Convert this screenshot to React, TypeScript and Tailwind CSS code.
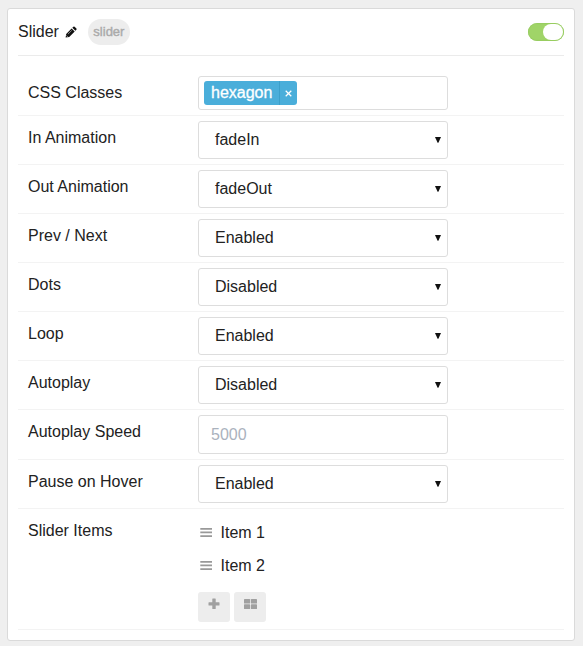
import type { ReactNode } from "react";

function Row({ label, children }: { label: string; children: ReactNode }) {
  return (
    <div className="flex border-b border-[#f3f3f3] py-[5px] pl-2.5">
      <div className="w-[170px] shrink-0 pt-[5px] leading-6">{label}</div>
      {children}
    </div>
  );
}

function Select({ value }: { value: string }) {
  return (
    <div className="flex h-[38px] w-[250px] items-center justify-between rounded-[3px] border border-[#dddddd] pr-[6px] pl-4">
      <span className="leading-6">{value}</span>
      <svg width="6" height="6" viewBox="0 0 6 6" fill="#111">
        <path d="M0 0H6L3.4 5.7H2.6Z" />
      </svg>
    </div>
  );
}

function Item({ name }: { name: string }) {
  return (
    <div className="flex h-[33px] items-center pl-[2px]">
      <svg width="12" height="9" viewBox="0 0 12 9" fill="#999" className="mr-[8.5px]">
        <path d="M0.3 0H12V1.7H0.3ZM0.3 3.6H12V5.3H0.3ZM0.3 7.2H12V8.9H0.3Z" />
      </svg>
      <span className="leading-6">{name}</span>
    </div>
  );
}

export default function App() {
  return (
    <div className="h-[646px] w-[583px] bg-[#efefef] pt-2 pl-[7px] font-['Liberation_Sans',Arial,sans-serif] text-base text-[#222]">
      <div className="h-[633px] w-[568px] rounded-[3px] border border-[#dadada] bg-white px-2.5">
        <div className="flex h-[47px] items-center border-b border-[#ebebeb]">
          <span className="leading-6">Slider</span>
          <svg width="12" height="12" viewBox="0 0 12 12" className="ml-[6px]">
            <path
              fill="#111"
              d="M0.6 11.4 1.2 7.9 6.6 2.5 9.7 5.6 4.2 11ZM7.3 1.8 8.4 0.7Q9 0.2 9.6 0.7L11.4 2.5Q11.9 3.1 11.4 3.7L10.4 4.8Z"
            />
            <path d="M2.9 8.2 6.8 4.3" stroke="#fff" strokeWidth="0.5" />
            <path d="M1.5 9.6 2.5 10.6" stroke="#fff" strokeWidth="0.8" />
          </svg>
          <span className="ml-[11px] flex h-[26px] w-[42px] items-center justify-center rounded-full bg-[#ededed] text-[13px] text-[#aaa] [-webkit-text-stroke:0.4px_#aaa]">
            slider
          </span>
          <span className="ml-auto flex h-[18px] w-9 justify-end rounded-full bg-[#a0d468] p-px shadow-[inset_0_0_1px_0.5px_#8fc659]">
            <span className="h-4 w-5 rounded-full bg-white" />
          </span>
        </div>
        <div className="pt-[15px]">
          <Row label="CSS Classes">
            <div className="flex h-[34px] w-[250px] items-center rounded-[3px] border border-[#dddddd] pl-[5px]">
              <span className="flex h-6 items-center rounded-[3px] bg-[#4aaeda] text-white">
                <span className="w-[75px] pl-[7px] leading-6 [-webkit-text-stroke:0.3px_#fff]">hexagon</span>
                <span className="flex h-6 w-[18px] items-center justify-center border-l border-[#3b9fca] pr-px">
                  <svg width="7" height="7" viewBox="0 0 8 8" stroke="#fff" strokeWidth="1.4">
                    <path d="M0.8 0.8 7.2 7.2M7.2 0.8 0.8 7.2" />
                  </svg>
                </span>
              </span>
            </div>
          </Row>
          <Row label="In Animation"><Select value="fadeIn" /></Row>
          <Row label="Out Animation"><Select value="fadeOut" /></Row>
          <Row label="Prev / Next"><Select value="Enabled" /></Row>
          <Row label="Dots"><Select value="Disabled" /></Row>
          <Row label="Loop"><Select value="Enabled" /></Row>
          <Row label="Autoplay"><Select value="Disabled" /></Row>
          <Row label="Autoplay Speed">
            <input
              placeholder="5000"
              className="h-[39px] w-[250px] rounded-[3px] border border-[#dddddd] px-3 placeholder:text-[#aab2bd]"
            />
          </Row>
          <Row label="Pause on Hover"><Select value="Enabled" /></Row>
          <Row label="Slider Items">
            <div className="pt-[2px]">
              <Item name="Item 1" />
              <Item name="Item 2" />
              <div className="mt-[10px] mb-[2px] flex gap-1">
                <button className="flex h-[30px] w-8 justify-center rounded-[3px] bg-[#ededed] pt-[6px]">
                  <svg width="12" height="12" viewBox="0 0 12 12" fill="#a0a0a0">
                    <path d="M4.8 0.5H7.2Q7.7 0.5 7.7 1V4.3H11Q11.5 4.3 11.5 4.8V7.1Q11.5 7.6 11 7.6H7.7V10.5Q7.7 11 7.2 11H4.8Q4.3 11 4.3 10.5V7.6H1Q0.5 7.6 0.5 7.1V4.8Q0.5 4.3 1 4.3H4.3V1Q4.3 0.5 4.8 0.5Z" />
                  </svg>
                </button>
                <button className="flex h-[30px] w-8 justify-center rounded-[3px] bg-[#ededed] pt-[7px]">
                  <svg width="13" height="11" viewBox="0 0 13 11" fill="#a0a0a0">
                    <rect width="6.1" height="4.5" rx="0.6" />
                    <rect x="6.9" width="6.1" height="4.5" rx="0.6" />
                    <rect y="5.3" width="6.1" height="4.7" rx="0.6" />
                    <rect x="6.9" y="5.3" width="6.1" height="4.7" rx="0.6" />
                  </svg>
                </button>
              </div>
            </div>
          </Row>
        </div>
      </div>
    </div>
  );
}
